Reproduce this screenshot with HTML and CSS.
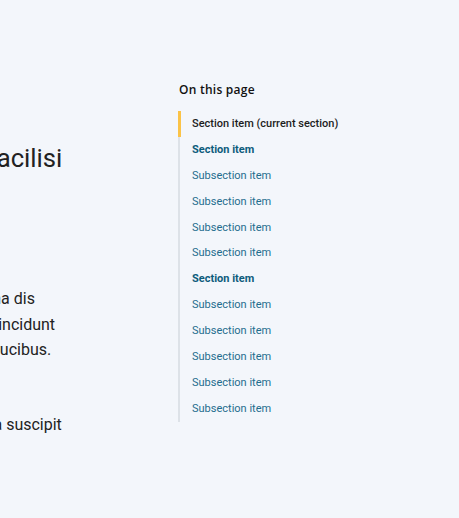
FILE: index.html
```html
<!DOCTYPE html>
<html lang="en">
<head>
<meta charset="utf-8">
<title>On this page</title>
<link rel="stylesheet" href="styles.css">
</head>
<body>
<div class="page">
  <main class="article">
    <h1 class="title">Lorem dolor sit amet facilisi</h1>
    <p class="para">Nulla facile morbi tempor iaculis urna dis<br>parturient monte nascitur ridiculus tincidunt<br>ornare massa eget egestas purus faucibus.<br>Sed viverra.</p>
    <p class="para">Amet luctus venenatis lectus magna suscipit</p>
  </main>
  <aside class="toc">
    <h2 class="toc-title">On this page</h2>
    <ul class="toc-list">
      <li class="toc-item current">Section item (current section)</li>
      <li class="toc-item section">Section item</li>
      <li class="toc-item sub">Subsection item</li>
      <li class="toc-item sub">Subsection item</li>
      <li class="toc-item sub">Subsection item</li>
      <li class="toc-item sub">Subsection item</li>
      <li class="toc-item section">Section item</li>
      <li class="toc-item sub">Subsection item</li>
      <li class="toc-item sub">Subsection item</li>
      <li class="toc-item sub">Subsection item</li>
      <li class="toc-item sub">Subsection item</li>
      <li class="toc-item sub">Subsection item</li>
    </ul>
  </aside>
</div>
</body>
</html>
```
FILE: styles.css
```css
html, body {
  margin: 0;
  padding: 0;
  background: #f3f6fb;
  overflow: hidden;
}
body {
  font-family: Roboto, "Liberation Sans", sans-serif;
  color: #222;
}
.page {
  display: flex;
  align-items: flex-start;
}
.article {
  flex: none;
  width: 340px;
  margin-left: -256px;
  padding-top: 140px;
  white-space: nowrap;
  text-align: left;
}
.title {
  margin: 0 0 110px;
  font-size: 25.7px;
  font-weight: 400;
  line-height: 36px;
  color: #222;
}
.para {
  margin: 0 0 24px;
  font-size: 16px;
  line-height: 25.6px;
  color: #222;
}
.toc {
  flex: none;
  margin-left: 94px;
  padding-top: 82px;
  width: 200px;
}
.toc-title {
  margin: 0 0 13px 1px;
  font-family: "Open Sans", "Noto Sans", sans-serif;
  font-size: 12px;
  font-weight: 600;
  line-height: 16px;
  letter-spacing: 0.25px;
  color: #111;
}
.toc-list {
  list-style: none;
  margin: 0;
  padding: 0;
  border-left: 2px solid #dde2e8;
}
.toc-item {
  position: relative;
  height: 25.9px;
  line-height: 25.9px;
  padding-left: 12px;
  font-size: 11px;
  white-space: nowrap;
}
.toc-item.current {
  font-weight: 500;
  color: #1d1d1d;
}
.toc-item.current::before {
  content: "";
  position: absolute;
  left: -2px;
  top: 0;
  bottom: 0;
  width: 3px;
  background: #fbc347;
}
.toc-item.section {
  font-weight: 700;
  color: #0e5c7c;
}
.toc-item.sub {
  color: #1f6d8e;
}
```
